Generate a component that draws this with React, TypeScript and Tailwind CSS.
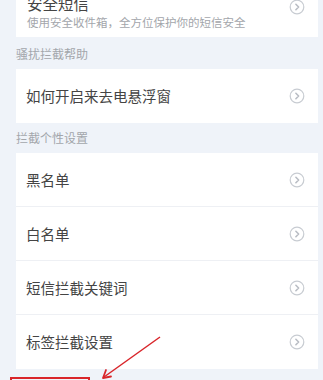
import React from 'react';

const Chevron: React.FC = () => (
  <svg width="16" height="16" viewBox="0 0 16 16" fill="none" className="shrink-0">
    <circle cx="8" cy="8" r="6.8" stroke="#c8ccd2" strokeWidth="1.2" />
    <path d="M6.9 5.3 L9.6 8 L6.9 10.7" stroke="#b9bdc4" strokeWidth="1.6" strokeLinecap="round" strokeLinejoin="round" />
  </svg>
);

const Row: React.FC<{ title: string; last?: boolean }> = ({ title, last }) => (
  <div className={`h-[54px] flex items-center justify-between pl-[10px] pr-[13px] ${last ? '' : 'border-b border-[#eef0f4]'}`}>
    <span className="text-[14.5px] text-[#444]">{title}</span>
    <Chevron />
  </div>
);

const SectionHeader: React.FC<{ title: string }> = ({ title }) => (
  <div className="h-[30px] flex items-center text-[12px] text-[#a3a6ab]">{title}</div>
);

export default function App() {
  const blockSettings = ['黑名单', '白名单', '短信拦截关键词', '标签拦截设置'];

  return (
    <div
      className="relative w-[323px] h-[380px] overflow-hidden bg-[#eff3f9] pl-[16px] pr-[5px]"
      style={{ fontFamily: '"Noto Sans CJK SC", "Noto Sans", sans-serif' }}
    >
      {/* 安全短信 card, top scrolled out of view */}
      <div className="-mt-[23px] h-[60px] bg-white flex items-center justify-between pl-[11px] pr-[13px]">
        <div className="flex flex-col pt-[9px]">
          <span className="text-[15.5px] leading-[20px] text-[#444]">安全短信</span>
          <span className="text-[11.5px] leading-[18px] text-[#a3a6ab]">使用安全收件箱，全方位保护你的短信安全</span>
        </div>
        <Chevron />
      </div>

      <div className="h-[32px] flex items-center text-[12px] text-[#a3a6ab] pt-[2px]">骚扰拦截帮助</div>
      <div className="bg-white">
        <Row title="如何开启来去电悬浮窗" last />
      </div>

      <SectionHeader title="拦截个性设置" />
      <div className="bg-white">
        {blockSettings.map((t, i) => (
          <Row key={t} title={t} last={i === blockSettings.length - 1} />
        ))}
      </div>

      {/* red annotation */}
      <div className="absolute left-[10px] top-[377px] w-[80px] h-[20px] border-2 border-[#d9252a]" />
      <svg className="absolute left-0 top-0" width="323" height="380" viewBox="0 0 323 380">
        <line x1="160" y1="337" x2="104" y2="377" stroke="#d9252a" strokeWidth="1.5" />
        <path d="M103 378 L106 370 M103 378 L111 376.5" stroke="#d9252a" strokeWidth="1.8" strokeLinecap="round" />
      </svg>
    </div>
  );
}
